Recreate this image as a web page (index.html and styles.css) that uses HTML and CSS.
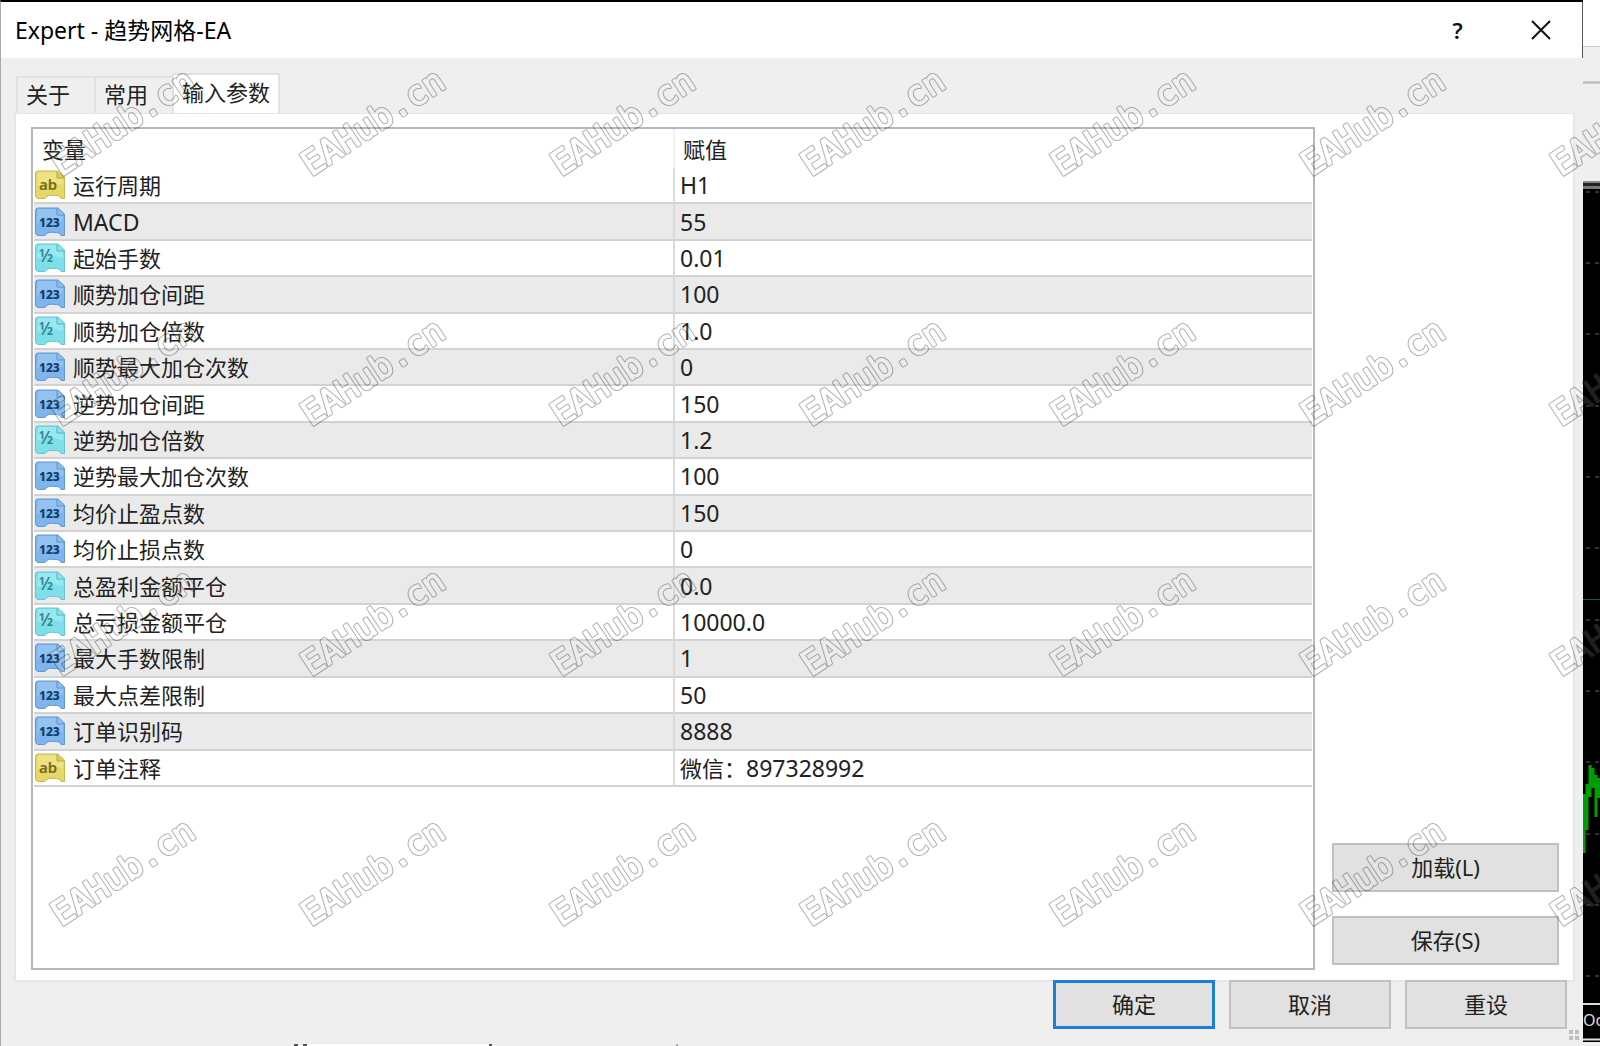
FILE: index.html
```
<!DOCTYPE html>
<html lang="zh-CN">
<head>
    <meta charset="UTF-8">
    <meta name="viewport" content="width=device-width, initial-scale=1.0">
    <title>Expert - 趋势网格-EA</title>
    <link rel="stylesheet" href="styles.css">
</head>
<body>
    <!-- Shared icons -->
    <svg class="sprite" aria-hidden="true">
        <symbol id="icon-string" viewBox="0 0 30 30">
            <path d="M3 1H23L29.500 7V28.500H26Q25 25 19 25.500Q13 24 10 28.500H3Q0 28 .5 24V4Q.5 1 3 1Z" fill="#e6d766" stroke="#c9b84c"/>
            <path d="M3 2H22V8H28V15Q14 11 2 16Z" fill="#f2ea97" opacity=".6"/>
            <path d="M22 1.500V8H29" fill="#d8c95c" stroke="#bba93f"/>
            <text x="4" y="20" class="glyph glyph-string">ab</text>
        </symbol>
        <symbol id="icon-int" viewBox="0 0 30 30">
            <path d="M3 1H23L29.500 7V28.500H26Q25 25 19 25.500Q13 24 10 28.500H3Q0 28 .5 24V4Q.5 1 3 1Z" fill="#7db5ec" stroke="#6399d3"/>
            <path d="M3 2H22V8H28V15Q14 11 2 16Z" fill="#a3cdf5" opacity=".6"/>
            <path d="M22 1.500V8H29" fill="#8dbfee" stroke="#5c91ca"/>
            <text x="4" y="20" class="glyph glyph-int">123</text>
        </symbol>
        <symbol id="icon-double" viewBox="0 0 30 30">
            <path d="M3 1H23L29.500 7V28.500H26Q25 25 19 25.500Q13 24 10 28.500H3Q0 28 .5 24V4Q.5 1 3 1Z" fill="#7edfe9" stroke="#62c6d4"/>
            <path d="M3 2H22V8H28V15Q14 11 2 16Z" fill="#a9eef4" opacity=".6"/>
            <path d="M22 1.500V8H29" fill="#8be2ea" stroke="#4fb4c2"/>
            <text x="4" y="19" class="glyph glyph-double">½</text>
        </symbol>
    </svg>

    <main class="dialog">
        <header class="title-bar">
            <h1>Expert - 趋势网格-EA</h1>
            <button type="button" class="title-btn" aria-label="Help">?</button>
            <button type="button" class="title-btn" aria-label="Close">
                <svg width="20" height="20" viewBox="0 0 20 20"><path d="M1 1L19 19M19 1L1 19" stroke="#111" stroke-width="2"/></svg>
            </button>
        </header>

        <div class="tabs" role="tablist">
            <button type="button" class="tab" role="tab">关于</button>
            <button type="button" class="tab" role="tab">常用</button>
            <button type="button" class="tab active" role="tab" aria-selected="true">输入参数</button>
        </div>

        <section class="panel">
            <div class="list-box">
                <table class="params">
                    <thead>
                        <tr><th>变量</th><th>赋值</th></tr>
                    </thead>
                    <tbody>
                        <tr><td><div class="name"><svg class="icon"><use href="#icon-string"/></svg>运行周期</div></td><td>H1</td></tr>
                        <tr><td><div class="name"><svg class="icon"><use href="#icon-int"/></svg><span class="latin">MACD</span></div></td><td>55</td></tr>
                        <tr><td><div class="name"><svg class="icon"><use href="#icon-double"/></svg>起始手数</div></td><td>0.01</td></tr>
                        <tr><td><div class="name"><svg class="icon"><use href="#icon-int"/></svg>顺势加仓间距</div></td><td>100</td></tr>
                        <tr><td><div class="name"><svg class="icon"><use href="#icon-double"/></svg>顺势加仓倍数</div></td><td>1.0</td></tr>
                        <tr><td><div class="name"><svg class="icon"><use href="#icon-int"/></svg>顺势最大加仓次数</div></td><td>0</td></tr>
                        <tr><td><div class="name"><svg class="icon"><use href="#icon-int"/></svg>逆势加仓间距</div></td><td>150</td></tr>
                        <tr><td><div class="name"><svg class="icon"><use href="#icon-double"/></svg>逆势加仓倍数</div></td><td>1.2</td></tr>
                        <tr><td><div class="name"><svg class="icon"><use href="#icon-int"/></svg>逆势最大加仓次数</div></td><td>100</td></tr>
                        <tr><td><div class="name"><svg class="icon"><use href="#icon-int"/></svg>均价止盈点数</div></td><td>150</td></tr>
                        <tr><td><div class="name"><svg class="icon"><use href="#icon-int"/></svg>均价止损点数</div></td><td>0</td></tr>
                        <tr><td><div class="name"><svg class="icon"><use href="#icon-double"/></svg>总盈利金额平仓</div></td><td>0.0</td></tr>
                        <tr><td><div class="name"><svg class="icon"><use href="#icon-double"/></svg>总亏损金额平仓</div></td><td>10000.0</td></tr>
                        <tr><td><div class="name"><svg class="icon"><use href="#icon-int"/></svg>最大手数限制</div></td><td>1</td></tr>
                        <tr><td><div class="name"><svg class="icon"><use href="#icon-int"/></svg>最大点差限制</div></td><td>50</td></tr>
                        <tr><td><div class="name"><svg class="icon"><use href="#icon-int"/></svg>订单识别码</div></td><td>8888</td></tr>
                        <tr><td><div class="name"><svg class="icon"><use href="#icon-string"/></svg>订单注释</div></td><td><span class="cjk">微信：</span>897328992</td></tr>
                    </tbody>
                </table>
            </div>
            <div class="side-actions">
                <button type="button" class="btn">加载(L)</button>
                <button type="button" class="btn">保存(S)</button>
            </div>
        </section>

        <footer class="actions">
            <button type="button" class="btn primary">确定</button>
            <button type="button" class="btn">取消</button>
            <button type="button" class="btn">重设</button>
            <svg class="grip" width="11" height="11" viewBox="0 0 11 11"><path d="M0 0h4v4H0zM6 0h4v4H6zM0 6h4v4H0zM6 6h4v4H6z" fill="#bdbdbd"/></svg>
        </footer>
        <svg class="edge" height="2" aria-hidden="true">
            <path d="M306 0h182v2H306z" fill="#fff"/>
            <path d="M293 0h4v2h-4zM302 0h4v2h-4zM488 0h3v2h-3z" fill="#555"/>
            <path d="M675 0h2v2h-2z" fill="#aaa"/>
        </svg>
    </main>

    <!-- Chart window behind the dialog -->
    <aside class="chart">
        <svg width="17" height="1046" viewBox="0 0 17 1046">
            <path d="M0 0H17V46H0Z" fill="#fff"/>
            <path d="M0 46H17V181H0Z" fill="#efefef"/>
            <path d="M0 46.500H17" stroke="#ccc"/>
            <path d="M0 82.500H17" stroke="#b5b5b5" stroke-width="2"/>
            <path d="M0 182H17" stroke="#888" stroke-width="2"/>
            <path d="M0 184.500H17" stroke="#222" stroke-width="3"/>
            <path d="M0 187.500H17" stroke="#777" stroke-width="3"/>
            <path d="M3 192H17M3 263H17M3 334H17M3 406H17M3 477H17M3 548H17M3 620H17M3 691H17M3 762H17M3 834H17M3 905H17M3 976H17" stroke="#24383a" stroke-width="2" stroke-dasharray="4 5"/>
            <path d="M0 599.500H17" stroke="#2c5054"/>
            <path d="M1 794V853M4 784V830M7 765V797M10 768V788M13 775V817M16 778V798" stroke="#009c00" stroke-width="3"/>
            <path d="M0 1004H17M0 1039.500H17" stroke="#ddd" stroke-width="2"/>
            <path d="M0 1042H17V1046H0Z" fill="#efefef"/>
            <text x="0" y="1026" class="axis-label">Oc</text>
        </svg>
    </aside>

    <!-- Repeating watermark -->
    <svg class="watermark" width="100%" height="100%" aria-hidden="true">
        <defs>
            <mask id="outline" maskUnits="userSpaceOnUse" x="0" y="0" width="250" height="250">
                <text x="0" y="0" transform="translate(61 177) rotate(-33.500)" class="mark mark-outer">EAHub.cn</text>
                <text x="0" y="0" transform="translate(61 177) rotate(-33.500)" class="mark mark-inner">EAHub.cn</text>
            </mask>
            <pattern id="marks" width="250" height="250" patternUnits="userSpaceOnUse">
                <rect width="250" height="250" fill="#000" opacity=".3" mask="url(#outline)"/>
                <text x="0" y="0" transform="translate(61 177) rotate(-33.500)" class="mark mark-fill">EAHub.cn</text>
            </pattern>
        </defs>
        <rect width="100%" height="100%" fill="url(#marks)"/>
    </svg>
</body>
</html>
```
FILE: styles.css
```
* {
    margin: 0;
    padding: 0;
    box-sizing: border-box;
}

body {
    font-family: "Noto Sans", "Noto Sans CJK SC", sans-serif;
    font-size: 22px;
    line-height: 30px;
    color: #222;
    background: #000;
    min-height: 100vh;
    display: flex;
    position: relative;
    overflow: hidden;
}

button {
    font: inherit;
    color: inherit;
    border: none;
    background: none;
}

.sprite {
    display: none;
}

.dialog {
    flex: 1;
    display: flex;
    flex-direction: column;
    background: #efefef;
    border-top: 2px solid #000;
    border-left: 1px solid #aaa;
}

/* Title bar */
.title-bar {
    display: flex;
    align-items: center;
    height: 56px;
    padding-left: 14px;
    background: #fff;
    border-right: 1px solid #555;
}

.title-bar h1 {
    flex: 1;
    font-size: 23px;
    font-weight: 400;
    color: #000;
}

.title-btn {
    display: flex;
    align-items: center;
    justify-content: center;
    width: 83px;
    height: 56px;
    font-weight: 600;
    color: #111;
}

/* Tabs */
.tabs {
    display: flex;
    align-items: flex-end;
    padding: 15px 15px 0;
}

.tab {
    height: 37px;
    padding: 0 24px 4px 8px;
    border: 2px solid #e2e2e2;
    border-right: none;
    border-bottom: none;
}

.tab.active {
    height: 40px;
    padding: 0 8px 4px;
    background: #fff;
    border-right: 2px solid #e2e2e2;
}

/* Panel */
.panel {
    flex: 1;
    display: flex;
    gap: 17px;
    margin: 0 8px 0 13px;
    padding: 13px 14px 10px 15px;
    background: #fff;
    border: 2px solid #e6e6e6;
    border-top-width: 1px;
}

.list-box {
    flex: 1;
    border: 2px solid #b4b8bd;
    padding: 0 1px;
}

.params {
    width: 100%;
    height: 658px;
    border-collapse: separate;
    border-spacing: 0;
    table-layout: fixed;
}

.params th {
    height: 39px;
    padding: 0 9px 0 8px;
    font-weight: 400;
    text-align: left;
}

.params th + th {
    padding-left: 8px;
    border-left: 2px solid #f0f0f0;
}

.params td {
    height: 36px;
    padding-left: 1px;
    border-bottom: 2px solid #d2d2d2;
}

.params td + td {
    padding-left: 5px;
    font-size: 23px;
    border-left: 2px solid #dadada;
}

.params tbody tr:nth-child(even) {
    background: #eaeaea;
}

.name {
    display: flex;
    align-items: center;
    gap: 8px;
}

.icon {
    width: 30px;
    height: 30px;
}

.latin {
    font-size: 23px;
}

.cjk {
    font-size: 22px;
}

.glyph {
    font-family: "Noto Sans", sans-serif;
    font-weight: 600;
}

.glyph-string {
    font-size: 15px;
    fill: #756a1c;
}

.glyph-int {
    font-size: 12px;
    font-weight: 800;
    fill: #123f6e;
}

.glyph-double {
    font-size: 17px;
    fill: #34858f;
}

/* Buttons */
.side-actions {
    display: flex;
    flex-direction: column;
    justify-content: flex-end;
    gap: 24px;
    width: 227px;
    padding-bottom: 5px;
}

.btn {
    height: 49px;
    padding-bottom: 1px;
    background: #e1e1e1;
    border: 2px solid #c0c0c0;
}

.btn.primary {
    border: 3px solid #1a80dc;
}

/* The buttons sit on the lower edge of the panel */
.actions {
    display: flex;
    justify-content: flex-end;
    gap: 14px;
    height: 64px;
    margin-top: -2px;
    padding-right: 16px;
    position: relative;
}

.actions .btn {
    width: 162px;
}

.grip {
    position: absolute;
    right: 3px;
    bottom: 3px;
}

.edge {
    width: 100%;
    display: block;
}

/* Chart strip */
.chart {
    width: 17px;
    border-top: 2px solid #000;
}

.chart svg {
    display: block;
    margin-top: -2px;
}

.axis-label {
    font-family: "Noto Sans", sans-serif;
    font-size: 16px;
    fill: #ddd;
}

/* Watermark */
.watermark {
    position: absolute;
    inset: 0;
    pointer-events: none;
}

.mark {
    font-family: "DejaVu Sans Mono", monospace;
    font-size: 34px;
    stroke-linejoin: round;
}

.mark-outer {
    fill: #fff;
    stroke: #fff;
    stroke-width: 3px;
}

.mark-inner {
    fill: #000;
    stroke: #000;
    stroke-width: 1px;
}

.mark-fill {
    fill: #fff;
    stroke: #fff;
    stroke-width: 1px;
    opacity: 0.12;
}
```
